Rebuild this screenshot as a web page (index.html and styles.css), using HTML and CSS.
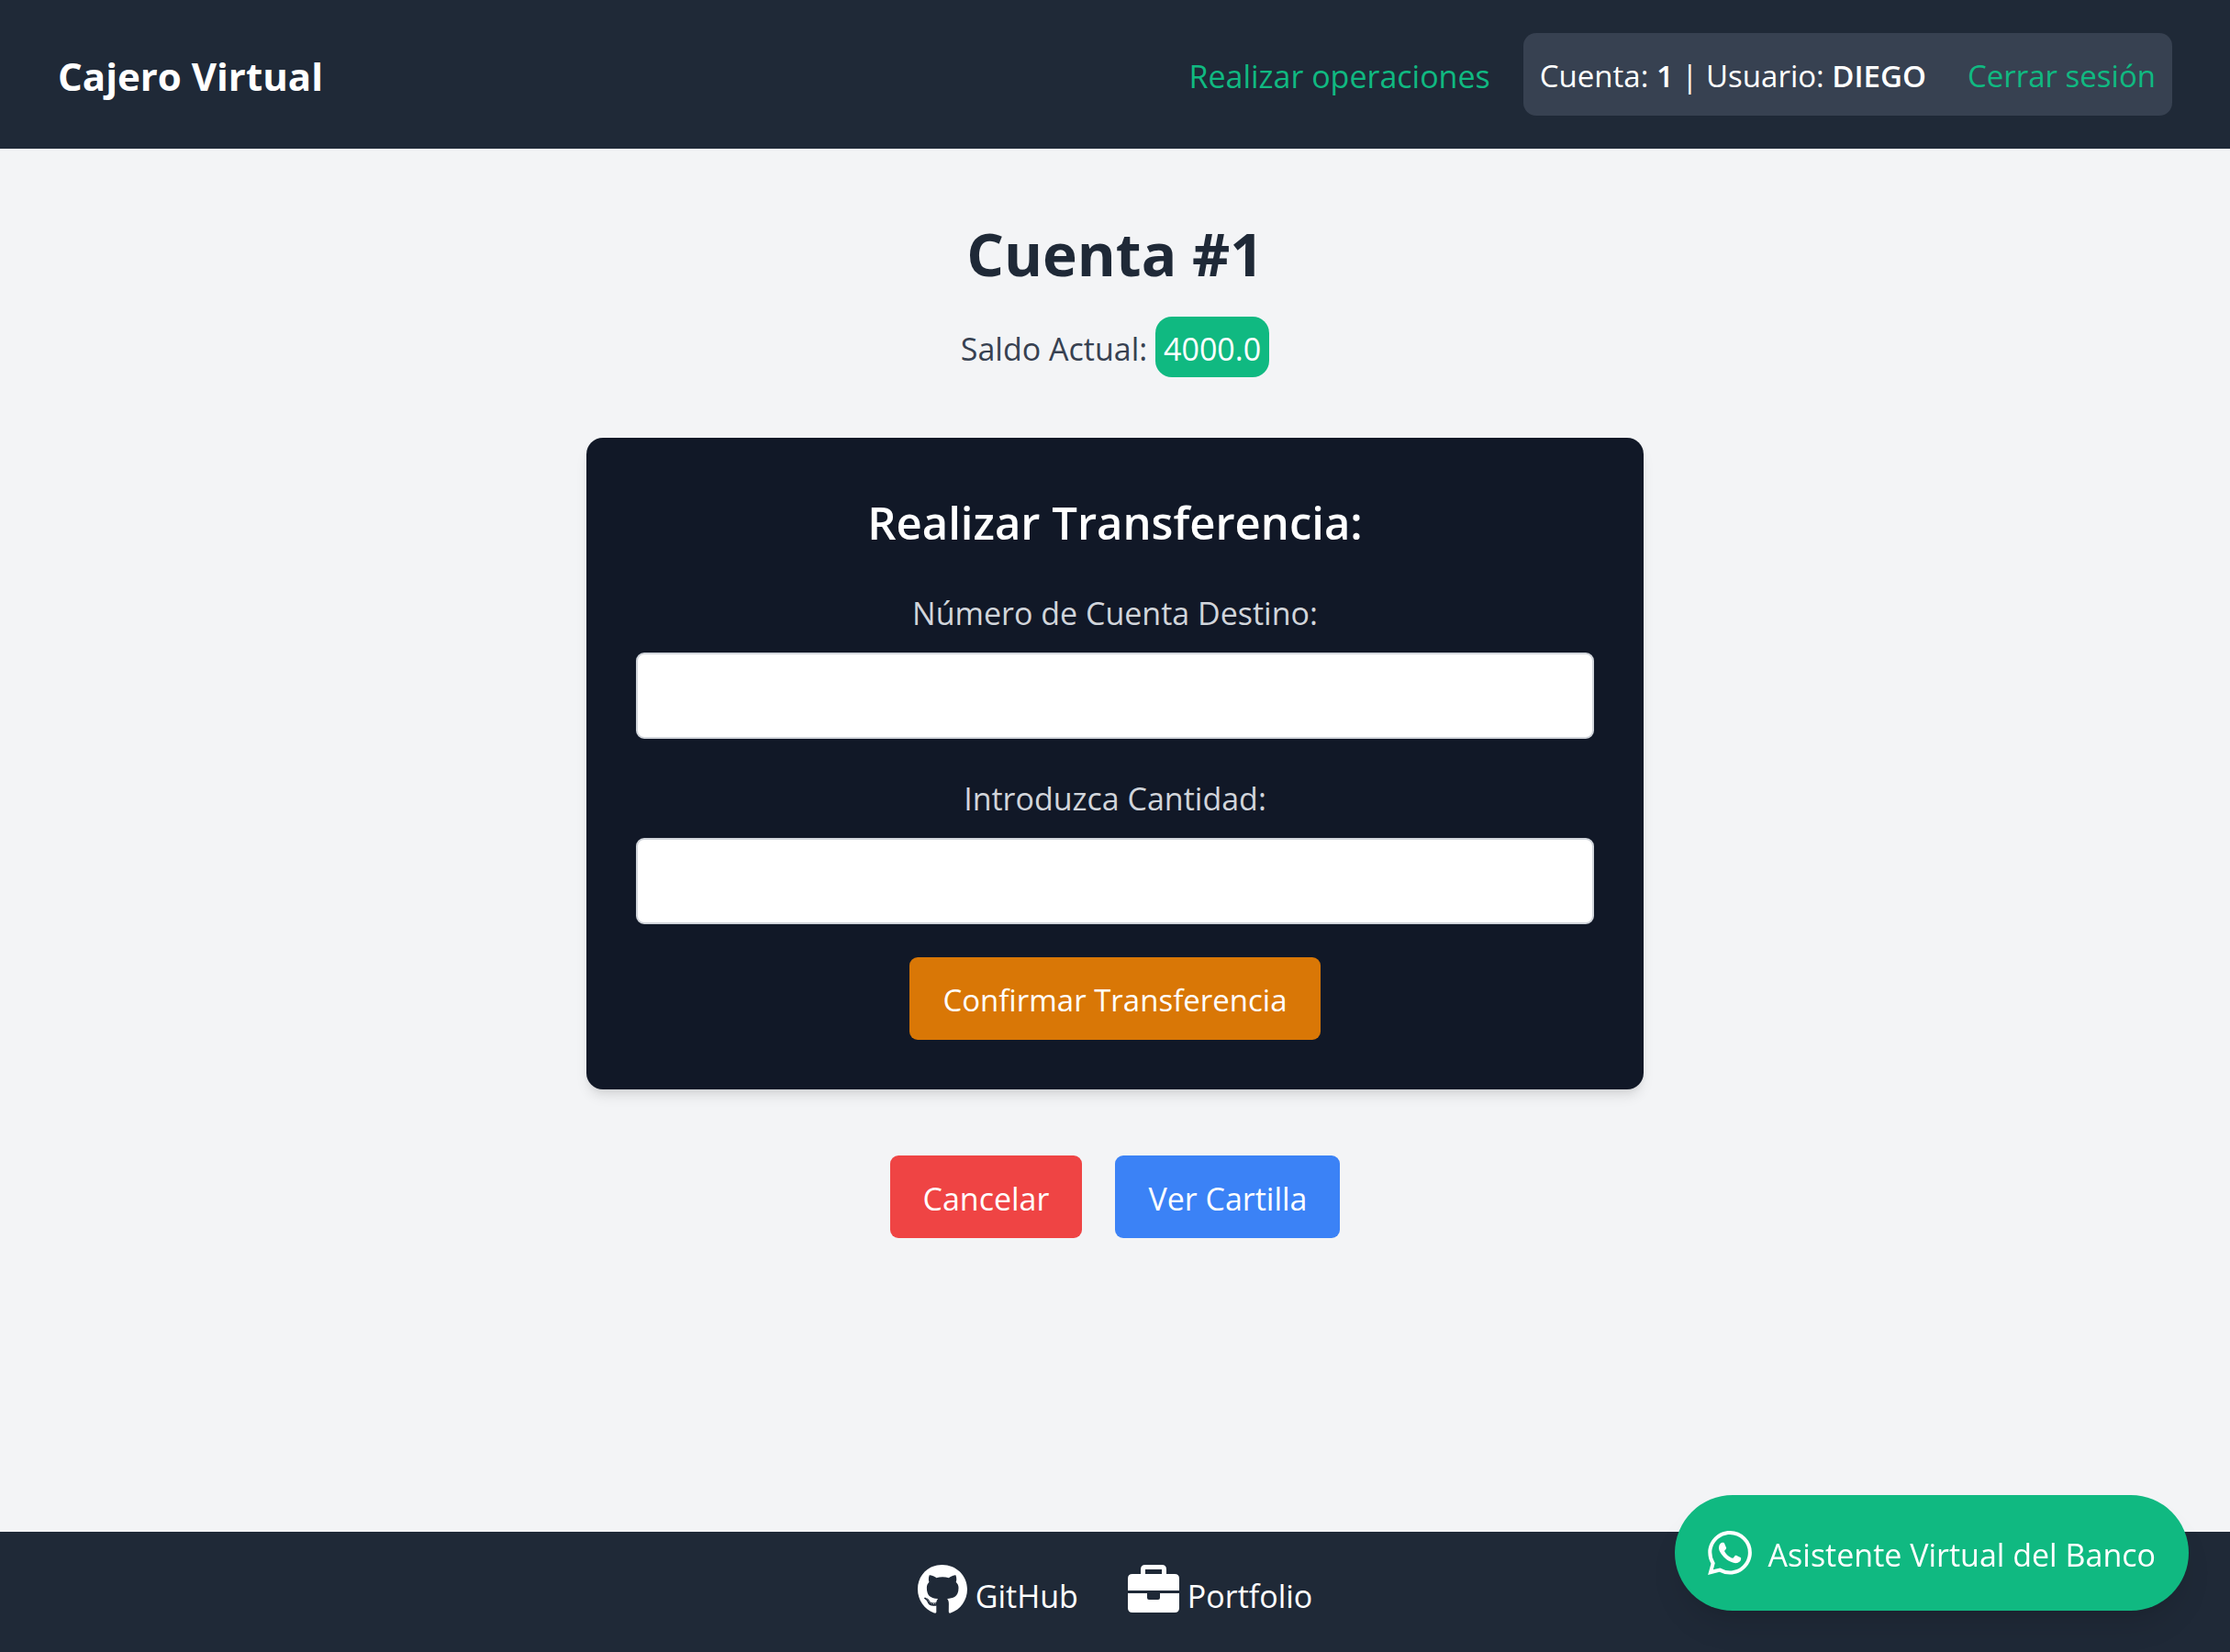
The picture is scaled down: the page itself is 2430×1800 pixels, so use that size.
FILE: index.html
```html
<!DOCTYPE html>
<html lang="es">
<head>
<meta charset="utf-8">
<meta name="viewport" content="width=device-width, initial-scale=1">
<title>Cajero Virtual</title>
<link rel="stylesheet" href="styles.css">
</head>
<body>
<header class="site-header">
  <p class="brand">Cajero Virtual</p>
  <nav class="nav">
    <a class="nav-link nav-main" href="#operaciones">Realizar operaciones</a>
    <div class="session">
      <span>Cuenta: <strong>1</strong> | Usuario: <strong>DIEGO</strong></span>
      <a class="nav-link" href="#salir">Cerrar sesión</a>
    </div>
  </nav>
</header>

<main class="main">
  <h1 class="title">Cuenta #1</h1>
  <p class="balance">Saldo Actual: <span class="badge">4000.0</span></p>

  <form class="card">
    <h2 class="card-title">Realizar Transferencia:</h2>
    <label class="label" for="destino">Número de Cuenta Destino:</label>
    <input class="field" id="destino" type="text">
    <label class="label" for="cantidad">Introduzca Cantidad:</label>
    <input class="field" id="cantidad" type="text">
    <button class="button button-confirm" type="submit">Confirmar Transferencia</button>
  </form>

  <div class="actions">
    <a class="button button-cancel" href="#cancelar">Cancelar</a>
    <a class="button button-view" href="#cartilla">Ver Cartilla</a>
  </div>
</main>

<footer class="site-footer">
  <a class="footer-link" href="#github">
    <svg class="footer-icon" viewBox="0 8 496 496" aria-hidden="true"><path d="M165.900 397.400c0 2-2.300 3.600-5.200 3.600-3.300.3-5.600-1.300-5.600-3.600 0-2 2.300-3.600 5.200-3.600 3-.3 5.600 1.300 5.600 3.600zm-31.100-4.500c-.7 2 1.300 4.300 4.300 4.900 2.600 1 5.600 0 6.200-2s-1.300-4.300-4.300-5.200c-2.600-.7-5.500.3-6.200 2.300zm44.200-1.700c-2.900.7-4.900 2.600-4.600 4.900.3 2 2.900 3.300 5.900 2.600 2.900-.7 4.900-2.600 4.600-4.600-.3-1.900-3-3.200-5.900-2.900zM244.800 8C106.100 8 0 113.300 0 252c0 110.900 69.800 205.800 169.500 239.200 12.800 2.300 17.300-5.600 17.300-12.100 0-6.200-.3-40.400-.3-61.400 0 0-70 15-84.700-29.800 0 0-11.400-29.100-27.800-36.600 0 0-22.900-15.700 1.600-15.400 0 0 24.900 2 38.600 25.800 21.900 38.600 58.600 27.500 72.900 20.900 2.300-16 8.800-27.100 16-33.700-55.900-6.200-112.300-14.300-112.300-110.500 0-27.500 7.600-41.300 23.600-58.900-2.600-6.500-11.100-33.300 2.600-67.900 20.900-6.500 69 27 69 27 20-5.600 41.500-8.500 62.800-8.500s42.800 2.900 62.800 8.500c0 0 48.100-33.600 69-27 13.700 34.700 5.200 61.400 2.600 67.900 16 17.700 25.800 31.500 25.800 58.900 0 96.500-58.900 104.200-114.800 110.500 9.200 7.900 17 22.900 17 46.400 0 33.700-.3 75.400-.3 83.600 0 6.500 4.600 14.400 17.300 12.100C428.200 457.800 496 362.900 496 252 496 113.300 383.500 8 244.800 8zM97.200 352.900c-1.300 1-1 3.300.7 5.200 1.600 1.600 3.900 2.300 5.200 1 1.300-1 1-3.300-.7-5.200-1.600-1.600-3.900-2.300-5.200-1zm-10.800-8.100c-.7 1.300.3 2.900 2.300 3.900 1.600 1 3.600.7 4.300-.7.7-1.300-.3-2.900-2.300-3.900-2-.6-3.600-.3-4.300.7zm32.400 35.600c-1.600 1.300-1 4.300 1.300 6.200 2.300 2.300 5.200 2.600 6.500 1 1.300-1.300.7-4.300-1.300-6.200-2.200-2.300-5.200-2.600-6.500-1zm-11.400-14.700c-1.600 1-1.600 3.600 0 5.900 1.600 2.300 4.300 3.300 5.600 2.300 1.600-1.300 1.600-3.900 0-6.200-1.400-2.300-4-3.300-5.600-2z"/></svg>
    GitHub
  </a>
  <a class="footer-link" href="#portfolio">
    <svg class="footer-icon" viewBox="0 0 56 54" aria-hidden="true"><path fill-rule="evenodd" d="M14 10V5q0-5 5-5h18q5 0 5 5v5h9q5 0 5 5v13H0V15q0-5 5-5zM19 5v5h18V5zM0 31h21v5q0 2 2 2h10q2 0 2-2v-5h21v16q0 5-5 5H5q-5 0-5-5z"/></svg>
    Portfolio
  </a>
</footer>

<a class="assistant" href="#asistente">
  <svg class="assistant-icon" viewBox="0 0 24 24" aria-hidden="true"><path d="M17.472 14.382c-.297-.149-1.758-.867-2.03-.967-.273-.099-.471-.148-.67.15-.197.297-.767.966-.94 1.164-.173.199-.347.223-.644.075-.297-.15-1.255-.463-2.39-1.475-.883-.788-1.48-1.761-1.653-2.059-.173-.297-.018-.458.13-.606.134-.133.298-.347.446-.52.149-.174.198-.298.298-.497.099-.198.05-.371-.025-.52-.075-.149-.669-1.612-.916-2.207-.242-.579-.487-.5-.669-.51-.173-.008-.371-.01-.57-.01-.198 0-.52.074-.792.372-.272.297-1.04 1.016-1.04 2.479 0 1.462 1.065 2.875 1.213 3.074.149.198 2.096 3.2 5.077 4.487.709.306 1.262.489 1.694.625.712.227 1.36.195 1.871.118.571-.085 1.758-.719 2.006-1.413.248-.694.248-1.289.173-1.413-.074-.124-.272-.198-.57-.347m-5.421 7.403h-.004a9.87 9.87 0 01-5.031-1.378l-.361-.214-3.741.982.998-3.648-.235-.374a9.86 9.86 0 01-1.51-5.26c.001-5.45 4.436-9.884 9.888-9.884 2.64 0 5.122 1.03 6.988 2.898a9.825 9.825 0 012.893 6.994c-.003 5.45-4.437 9.884-9.885 9.884m8.413-18.297A11.815 11.815 0 0012.05 0C5.495 0 .16 5.335.157 11.892c0 2.096.547 4.142 1.588 5.945L.057 24l6.305-1.654a11.882 11.882 0 005.683 1.448h.005c6.554 0 11.89-5.335 11.893-11.893a11.821 11.821 0 00-3.48-8.413z"/></svg>
  <span class="assistant-text">Asistente Virtual del Banco</span>
</a>
</body>
</html>
```
FILE: styles.css
```css
* {
  box-sizing: border-box;
  margin: 0;
}

body {
  min-height: 100vh;
  display: flex;
  flex-direction: column;
  background: #f3f4f6;
  color: #fff;
  font: 34px/54px "Segoe UI", "Open Sans", "Noto Sans", sans-serif;
}

a {
  color: inherit;
  text-decoration: none;
}

strong {
  font-weight: 600;
}

.site-header {
  display: flex;
  align-items: center;
  justify-content: space-between;
  padding: 36px 63px;
  background: #1f2937;
}

.brand {
  padding-top: 4px;
  font-size: 42px;
  font-weight: 700;
}

.nav {
  display: flex;
  align-items: center;
  gap: 36px;
}

.nav-link {
  color: #10b981;
}

.nav-main {
  padding-top: 4px;
}

.session {
  display: flex;
  gap: 45px;
  padding: 20px 18px 16px;
  border-radius: 14px;
  background: #374151;
  font-size: 33px;
}

.main {
  flex: 1;
  display: flex;
  flex-direction: column;
  align-items: center;
  padding: 74px 36px 72px;
}

.title {
  color: #1f2937;
  font-size: 64px;
  font-weight: 700;
  line-height: 81px;
}

.balance {
  margin: 28px 0 66px;
  color: #374151;
}

.badge {
  display: inline-block;
  padding: 8px 9px 4px;
  border-radius: 18px;
  background: #10b981;
  color: #fff;
}

.card {
  width: 100%;
  max-width: 1152px;
  display: flex;
  flex-direction: column;
  align-items: center;
  padding: 54px;
  border-radius: 18px;
  background: #111827;
  box-shadow: 0 9px 14px -2px rgba(0, 0, 0, 0.1), 0 5px 9px -5px rgba(0, 0, 0, 0.1);
}

.card-title {
  padding-top: 2px;
  margin-bottom: 34px;
  font-size: 49px;
  font-weight: 600;
  line-height: 72px;
}

.label {
  padding-top: 2px;
  margin-bottom: 16px;
  color: #d1d5db;
}

.field {
  width: 100%;
  height: 94px;
  margin-bottom: 36px;
  padding: 18px;
  border: 2px solid #d1d5db;
  border-radius: 9px;
  background: #fff;
  color: #111827;
  font: inherit;
}

.button {
  padding: 20px 36px 16px;
  border: 0;
  border-radius: 9px;
  color: #fff;
  font: inherit;
}

.button-confirm {
  background: #d97706;
  font-size: 33px;
}

.button-cancel {
  background: #ef4444;
}

.button-view {
  background: #3b82f6;
}

.actions {
  display: flex;
  gap: 36px;
  margin-top: 72px;
}

.site-footer {
  display: flex;
  justify-content: center;
  gap: 54px;
  padding: 36px;
  background: #1f2937;
}

.footer-link {
  display: flex;
  align-items: flex-end;
  gap: 9px;
  line-height: 50px;
}

.footer-icon {
  height: 54px;
  margin-bottom: 5px;
  fill: currentColor;
}

.assistant {
  position: fixed;
  right: 45px;
  bottom: 45px;
  display: flex;
  align-items: center;
  gap: 18px;
  padding: 36px;
  border-radius: 63px;
  background: #10b981;
  box-shadow: 0 22px 34px -7px rgba(0, 0, 0, 0.1), 0 9px 14px -9px rgba(0, 0, 0, 0.1);
}

.assistant-icon {
  width: 48px;
  height: 48px;
  fill: currentColor;
}

.assistant-text {
  padding-top: 4px;
  line-height: 50px;
}
```
